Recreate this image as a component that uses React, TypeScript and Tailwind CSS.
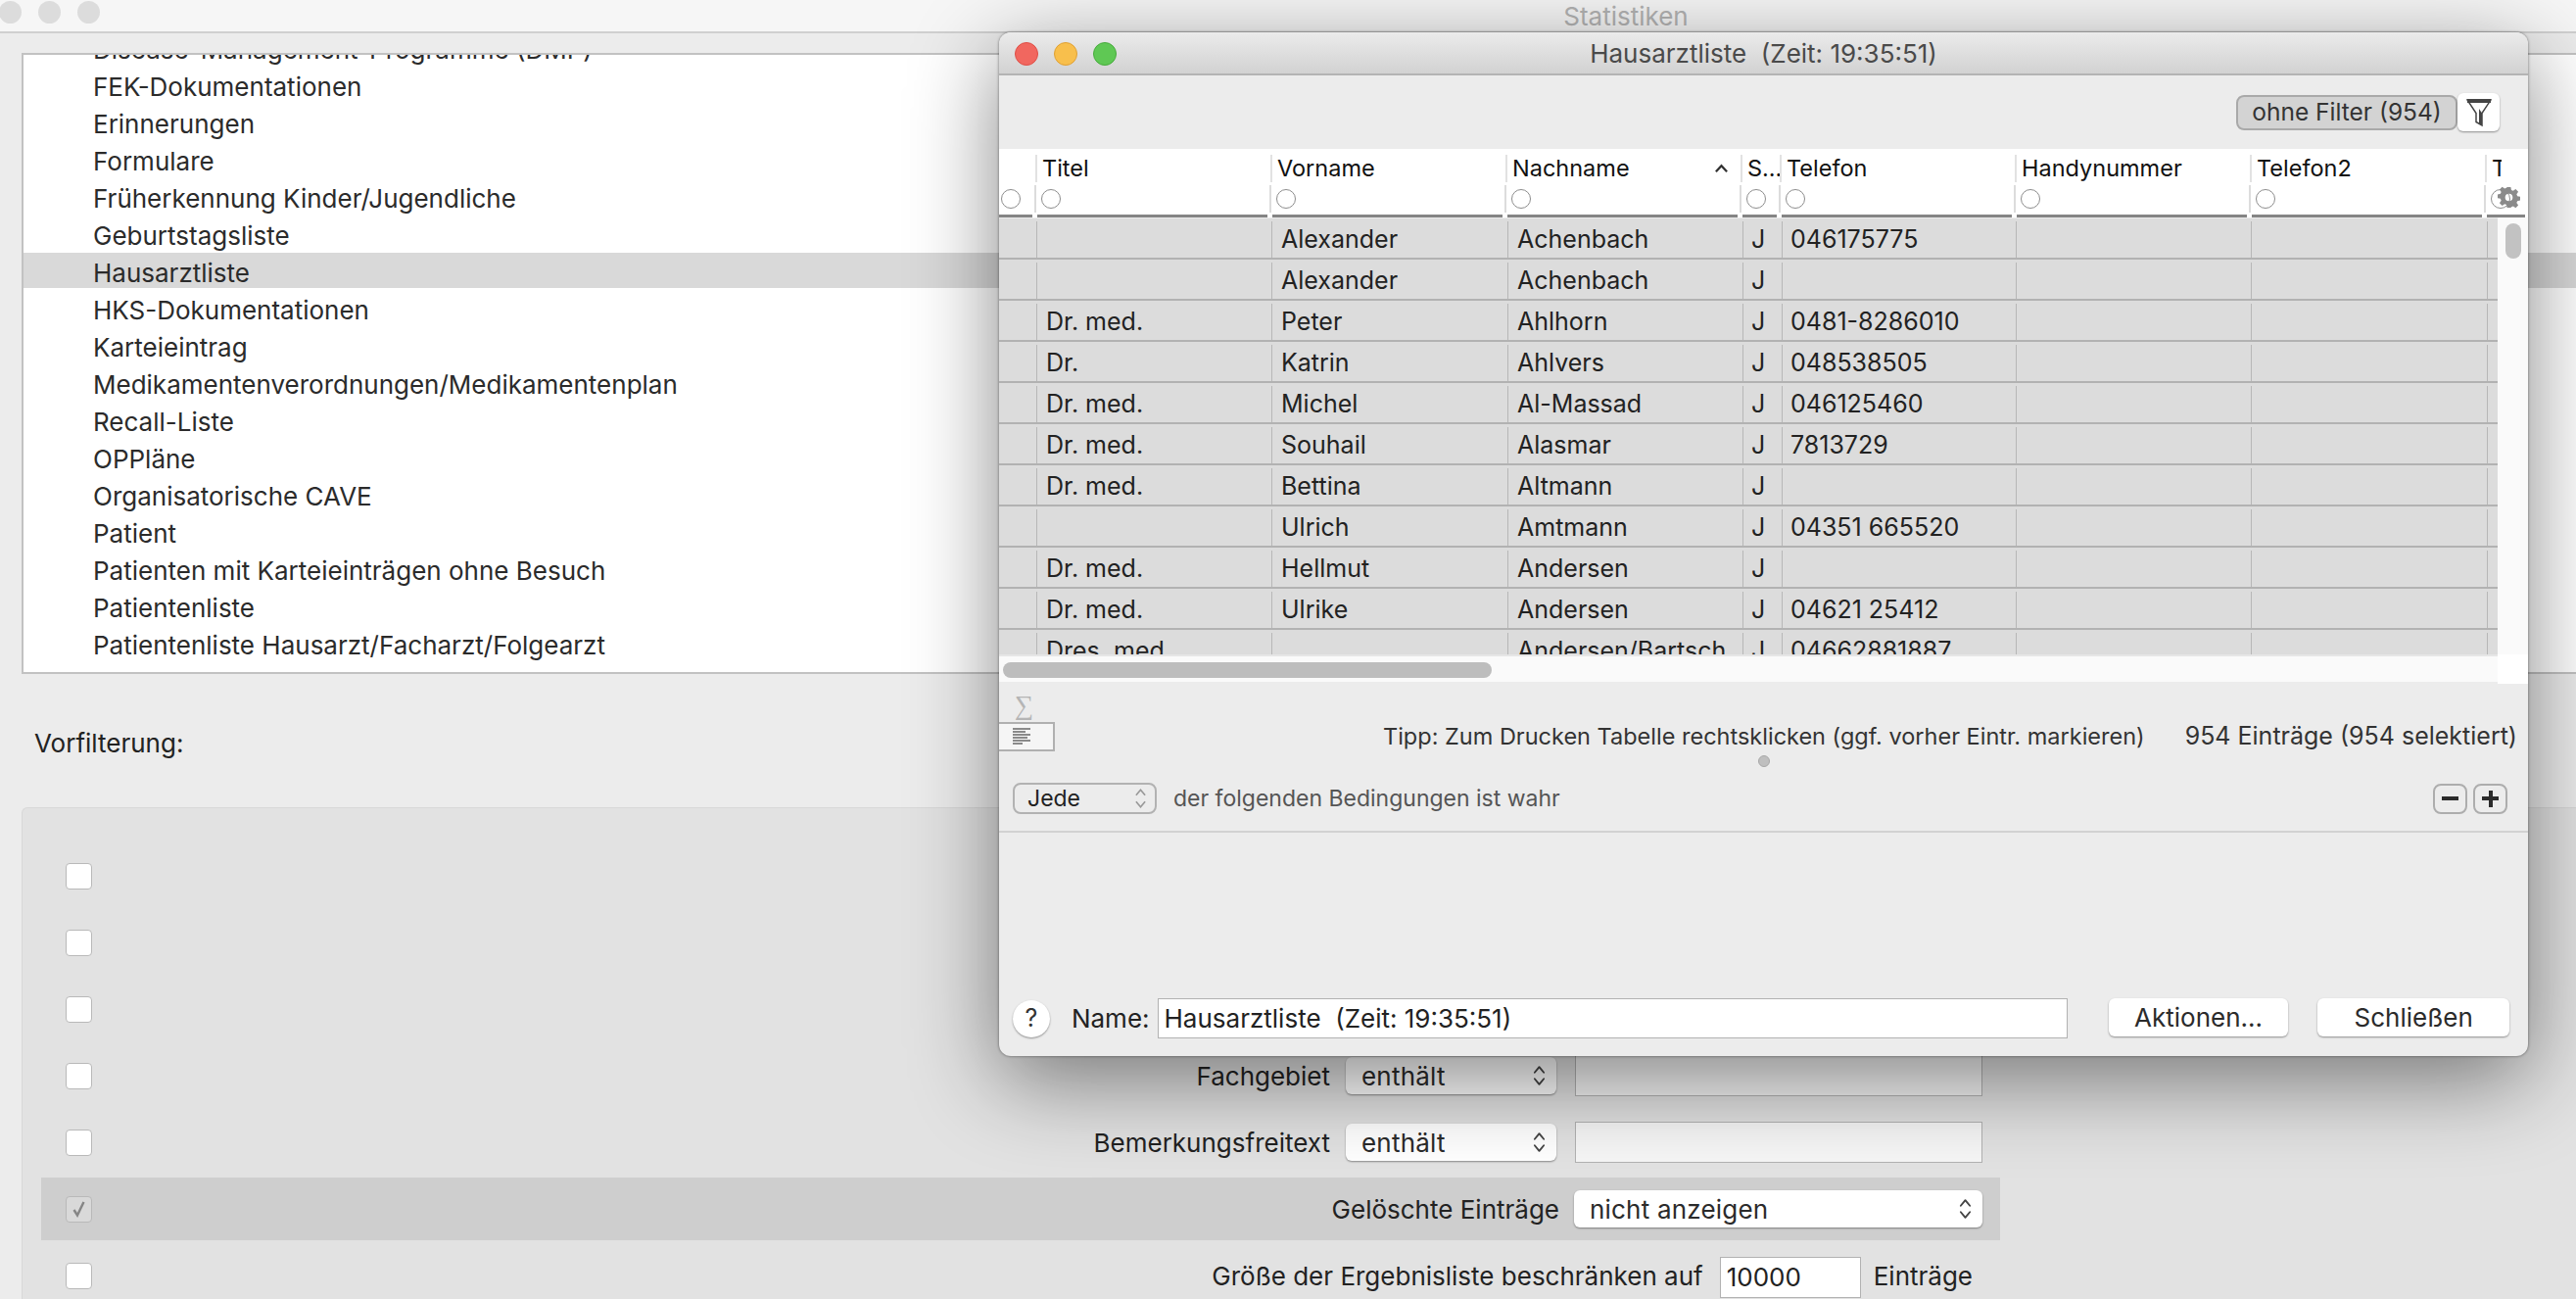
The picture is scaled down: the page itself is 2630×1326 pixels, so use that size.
import React from 'react';

const listItems = [
  'Disease-Management-Programme (DMP)',
  'FEK-Dokumentationen',
  'Erinnerungen',
  'Formulare',
  'Früherkennung Kinder/Jugendliche',
  'Geburtstagsliste',
  'Hausarztliste',
  'HKS-Dokumentationen',
  'Karteieintrag',
  'Medikamentenverordnungen/Medikamentenplan',
  'Recall-Liste',
  'OPPläne',
  'Organisatorische CAVE',
  'Patient',
  'Patienten mit Karteieinträgen ohne Besuch',
  'Patientenliste',
  'Patientenliste Hausarzt/Facharzt/Folgearzt',
];

const rows = [
  ['', 'Alexander', 'Achenbach', 'J', '046175775'],
  ['', 'Alexander', 'Achenbach', 'J', ''],
  ['Dr. med.', 'Peter', 'Ahlhorn', 'J', '0481-8286010'],
  ['Dr.', 'Katrin', 'Ahlvers', 'J', '048538505'],
  ['Dr. med.', 'Michel', 'Al-Massad', 'J', '046125460'],
  ['Dr. med.', 'Souhail', 'Alasmar', 'J', '7813729'],
  ['Dr. med.', 'Bettina', 'Altmann', 'J', ''],
  ['', 'Ulrich', 'Amtmann', 'J', '04351 665520'],
  ['Dr. med.', 'Hellmut', 'Andersen', 'J', ''],
  ['Dr. med.', 'Ulrike', 'Andersen', 'J', '04621 25412'],
  ['Dres. med.', '', 'Andersen/Bartsch', 'J', '04662881887'],
];

function Stepper({ className }: { className?: string }) {
  return (
    <svg viewBox="0 0 14 26" className={className} fill="none" stroke="#444" strokeWidth="2" strokeLinecap="round" strokeLinejoin="round">
      <path d="M2 9.5 7 3.5l5 6" />
      <path d="M2 16.5l5 6 5-6" />
    </svg>
  );
}

function Select({ label, className }: { label: string; className: string }) {
  return (
    <div className={`flex items-center justify-between h-[38px] bg-white rounded-[6px] shadow-[0_1px_2px_rgba(0,0,0,0.4)] pl-[16px] pr-[11px] ${className}`}>
      <span className="text-[26px] text-[#2b2b2b] tracking-[0.2px]">{label}</span>
      <Stepper className="w-[13px] h-[26px]" />
    </div>
  );
}

function Checkbox({ checked }: { checked?: boolean }) {
  return (
    <div className={`w-[27px] h-[27px] rounded-[4px] border border-[#b9b9b9] flex items-center justify-center shrink-0 ${checked ? 'bg-[#d9d9d9]' : 'bg-white'}`}>
      {checked && (
        <svg viewBox="0 0 20 20" className="w-[20px] h-[20px]" fill="none" stroke="#858585" strokeWidth="2.4">
          <path d="M4.5 11l3.5 5.5L14.5 3" />
        </svg>
      )}
    </div>
  );
}

function FilterRow({ checked, highlighted, children }: { checked?: boolean; highlighted?: boolean; children?: React.ReactNode }) {
  return (
    <div className={`flex items-center h-[64px] mb-[4px] pl-[25px] pr-[18px] ${highlighted ? 'bg-[#cecece]' : ''}`}>
      <Checkbox checked={checked} />
      <div className="flex-1 flex items-center justify-end">{children}</div>
    </div>
  );
}

function Radio() {
  return <div className="w-[20px] h-[20px] rounded-full border border-[#8d8d8d] bg-white shrink-0" />;
}

const headerCols = [
  { w: 'w-[37px]', label: '', first: true },
  { w: 'w-[240px]', label: 'Titel' },
  { w: 'w-[240px]', label: 'Vorname' },
  { w: 'w-[240px]', label: 'Nachname', sorted: true },
  { w: 'w-[40px]', label: 'S...' },
  { w: 'w-[240px]', label: 'Telefon' },
  { w: 'w-[240px]', label: 'Handynummer' },
  { w: 'w-[240px]', label: 'Telefon2' },
  { w: 'w-[44px]', label: 'T', clip: true },
];

function HeaderCell({ col }: { col: (typeof headerCols)[number] }) {
  return (
    <div className={`${col.w} shrink-0 flex flex-col`}>
      <div className={`h-[28px] mt-[6px] flex items-center justify-between pl-[5px] pr-[12px] text-[23.5px] text-[#111] whitespace-nowrap ${col.first ? '' : 'border-l-2 border-[#e2e2e2]'}`}>
        <span className={col.clip ? 'w-[10px] overflow-hidden' : ''}>{col.label}</span>
        {col.sorted && (
          <svg viewBox="0 0 16 10" className="w-[15px] h-[10px]" fill="none" stroke="#333" strokeWidth="2.4">
            <path d="M2 8.5 8 2l6 6.5" />
          </svg>
        )}
      </div>
      <div className={`h-[28px] mt-[3px] flex items-center ${col.first ? 'pl-[2px]' : 'pl-[5px] border-l-2 border-[#dcdcdc] -ml-[1px]'}`}>
        <Radio />
      </div>
      <div className={`h-[3px] mt-[2px] bg-[#858585] ${col.first ? 'mr-[3px]' : 'ml-[2px] mr-[3px]'}`} />
    </div>
  );
}

function BodyCell({ w, text, first, tight }: { w: string; text?: string; first?: boolean; tight?: boolean }) {
  return (
    <div className={`${w} shrink-0 mt-[3px] whitespace-nowrap overflow-hidden leading-[37px] ${first ? '' : 'border-l border-[#b7b7b7]'} ${tight ? 'pl-[8px]' : 'pl-[9px]'}`}>
      {text}
    </div>
  );
}

function Gear() {
  return (
    <svg viewBox="0 0 24 24" className="w-[23px] h-[23px]" fill="#8a8a8a">
      <path
        fillRule="evenodd"
        d="M10 1h4l.6 3.2 1.9.8 2.7-1.8 2.8 2.8-1.8 2.7.8 1.9 3.2.6v4l-3.2.6-.8 1.9 1.8 2.7-2.8 2.8-2.7-1.8-1.9.8L14 23h-4l-.6-3.2-1.9-.8-2.7 1.8L2 18l1.8-2.7-.8-1.9L0 12.800v-4l3-.6.8-1.900L2 3.600 4.800.800 7.500 2.600 9.400 1.800z M12 8a4 4 0 1 0 0 8 4 4 0 0 0 0-8z"
      />
    </svg>
  );
}

function Dialog() {
  return (
    <div className="absolute left-[1020px] top-[33px] w-[1561px] h-[1045px] flex flex-col bg-[#ececec] rounded-[12px] overflow-hidden shadow-[0_24px_90px_rgba(0,0,0,0.48),0_0_3px_rgba(0,0,0,0.5)]">
      {/* Titelleiste */}
      <div className="relative h-[44px] shrink-0 flex items-center justify-center bg-gradient-to-b from-[#ebebeb] to-[#d2d2d2] border-b-2 border-[#b4b4b4]">
        <div className="absolute left-[16px] top-[10px] flex gap-[16px]">
          <div className="w-[24px] h-[24px] rounded-full bg-[#f1675f] border border-[#df4f47]" />
          <div className="w-[24px] h-[24px] rounded-full bg-[#f8bf4c] border border-[#dfa034]" />
          <div className="w-[24px] h-[24px] rounded-full bg-[#5fc854] border border-[#48ab3d]" />
        </div>
        <span className="text-[26px] text-[#4a4a4a] whitespace-pre">Hausarztliste  (Zeit: 19:35:51)</span>
      </div>

      {/* Filter-Leiste */}
      <div className="h-[75px] shrink-0 flex items-center justify-end pr-[29px]">
        <div className="h-[36px] w-[226px] flex items-center justify-center bg-[#d3d3d3] border-2 border-[#a9a9a9] rounded-[8px] text-[24.5px] text-[#333]">
          ohne Filter (954)
        </div>
        <div className="h-[39px] w-[43px] flex items-center justify-center bg-white rounded-[6px] shadow-[0_1px_2px_rgba(0,0,0,0.4)]">
          <svg viewBox="0 0 26 30" className="w-[26px] h-[30px]">
            <path d="M1 2h24L16 15.500V28l-6-3.500V15.500z" fill="#fff" stroke="#444" strokeWidth="1.500" />
            <path d="M1 1h24v4H1z" fill="#444" />
            <path d="M13 11l3 4.500V28l-3-2z" fill="#444" />
          </svg>
        </div>
      </div>

      {/* Tabellenkopf */}
      <div className="relative h-[70px] shrink-0 flex bg-white">
        {headerCols.map((col) => (
          <HeaderCell key={col.label || 'sel'} col={col} />
        ))}
        <div className="absolute left-[1530px] top-[38px]">
          <Gear />
        </div>
      </div>

      {/* Tabellenzeilen */}
      <div className="h-[446px] shrink-0 flex">
        <div className="w-[1530px] shrink-0 overflow-hidden pt-[1px] text-[25px] text-[#222]">
          {rows.map((r, i) => (
            <div key={i} className="flex h-[42px] bg-[#dcdcdc] border-b-2 border-[#b2b2b2]">
              <BodyCell w="w-[38px]" first />
              <BodyCell w="w-[240px]" text={r[0]} />
              <BodyCell w="w-[241px]" text={r[1]} />
              <BodyCell w="w-[240px]" text={r[2]} />
              <BodyCell w="w-[40px]" text={r[3]} tight />
              <BodyCell w="w-[239px]" text={r[4]} tight />
              <BodyCell w="w-[240px]" />
              <BodyCell w="w-[241px]" />
              <BodyCell w="w-[11px]" />
            </div>
          ))}
        </div>
        <div className="flex-1 bg-[#fafafa] pl-[8px] pt-[6px]">
          <div className="w-[16px] h-[36px] rounded-full bg-[#c2c2c2]" />
        </div>
      </div>

      {/* Horizontaler Rollbalken */}
      <div className="h-[30px] shrink-0 flex">
        <div className="w-[1530px] shrink-0 border-t-2 border-[#e6e6e6] border-b-2 border-b-[#ececec] bg-[#fafafa] pl-[4px] pt-[6px]">
          <div className="w-[499px] h-[16px] rounded-full bg-[#bdbdbd]" />
        </div>
        <div className="flex-1 bg-white" />
      </div>

      {/* Status */}
      <div className="h-[72px] shrink-0 flex items-end pb-[3px] pr-[11px]">
        <div className="w-[57px] shrink-0 flex flex-col">
          <span className="h-[34px] pl-[16px] text-[27px] leading-[34px] text-[#b5b5b5] font-['Liberation_Serif',serif]">∑</span>
          <div className="h-[30px] flex items-center justify-center pr-[8px] bg-[#f5f5f5] border-2 border-l-0 border-[#b0b0b0]">
            <svg viewBox="0 0 20 18" className="w-[20px] h-[18px]" fill="#8a8a8a">
              <path d="M0 0h18v2H0zM0 3h13v2H0zM0 6h18v2H0zM0 9h15v2H0zM0 12h18v2H0zM0 15h10v2H0z" />
            </svg>
          </div>
        </div>
        <div className="flex-1 h-[30px] flex items-center justify-end gap-[41px] whitespace-nowrap">
          <span className="text-[23.5px] text-[#333]">Tipp: Zum Drucken Tabelle rechtsklicken (ggf. vorher Eintr. markieren)</span>
          <span className="text-[25px] text-[#333]">954 Einträge (954 selektiert)</span>
        </div>
      </div>
      <div className="h-[14px] shrink-0 flex items-center justify-center">
        <div className="w-[12px] h-[12px] rounded-full bg-[#bfbfbf] border border-[#a8a8a8]" />
      </div>

      {/* Bedingungen */}
      <div className="h-[32px] mt-[15px] shrink-0 flex items-center pl-[14px] pr-[21px]">
        <div className="w-[147px] h-[32px] flex items-center justify-between pl-[13px] pr-[8px] border-2 border-[#b2b2b2] rounded-[8px] text-[23px] text-[#222]">
          Jede
          <svg viewBox="0 0 14 26" className="w-[13px] h-[24px]" fill="none" stroke="#999" strokeWidth="1.800">
            <path d="M2 9.500 7 3.500l5 6" />
            <path d="M2 16.500l5 6 5-6" />
          </svg>
        </div>
        <span className="ml-[17px] text-[23px] text-[#555]">der folgenden Bedingungen ist wahr</span>
        <div className="ml-auto flex gap-[6px]">
          <div className="w-[35px] h-[31px] flex items-center justify-center border-2 border-[#adadad] rounded-[8px]">
            <div className="w-[17px] h-[4px] bg-[#2b2b2b]" />
          </div>
          <div className="relative w-[35px] h-[31px] flex items-center justify-center border-2 border-[#adadad] rounded-[8px]">
            <div className="w-[17px] h-[4px] bg-[#2b2b2b]" />
            <div className="absolute w-[4px] h-[17px] bg-[#2b2b2b]" />
          </div>
        </div>
      </div>
      <div className="h-[2px] mt-[17px] shrink-0 bg-[#d2d2d2]" />
      <div className="flex-1" />

      {/* Fusszeile */}
      <div className="h-[41px] mb-[18px] shrink-0 flex items-center pl-[14px] pr-[19px]">
        <div className="w-[38px] h-[38px] rounded-full bg-white shadow-[0_1px_2px_rgba(0,0,0,0.4)] flex items-center justify-center text-[25px] text-[#333]">?</div>
        <span className="ml-[22px] text-[26px] text-[#222]">Name:</span>
        <div className="ml-[8px] w-[931px] h-[41px] flex items-center pl-[6px] bg-white border border-[#b2b2b2] text-[26px] text-[#222] whitespace-pre">
          Hausarztliste  (Zeit: 19:35:51)
        </div>
        <div className="ml-[42px] w-[184px] h-[39px] mb-[2px] flex items-center justify-center bg-white rounded-[6px] shadow-[0_1px_2px_rgba(0,0,0,0.4)] text-[26px] text-[#2b2b2b]">Aktionen...</div>
        <div className="ml-[30px] w-[196px] h-[39px] mb-[2px] flex items-center justify-center bg-white rounded-[6px] shadow-[0_1px_2px_rgba(0,0,0,0.4)] text-[26px] text-[#2b2b2b]">Schließen</div>
      </div>
    </div>
  );
}

export default function App() {
  return (
    <div className="relative w-[2630px] h-[1326px] overflow-hidden bg-[#ececec] font-['Inter','Liberation_Sans',sans-serif] text-[26px] text-[#222]">
      {/* Hauptfenster */}
      <div className="h-[34px] relative flex items-center justify-center bg-[#f6f6f6] border-b-2 border-[#d0d0d0]">
        <div className="absolute left-[-1px] top-[1px] flex gap-[17px]">
          <div className="w-[23px] h-[23px] rounded-full bg-[#dcdcdc]" />
          <div className="w-[23px] h-[23px] rounded-full bg-[#dcdcdc]" />
          <div className="w-[23px] h-[23px] rounded-full bg-[#dcdcdc]" />
        </div>
        <span className="ml-[690px] text-[26px] text-[#b3b3b3]">Statistiken</span>
      </div>

      <div className="pl-[22px]">
        <div className="mt-[20px] h-[634px] bg-white border-2 border-[#c2c2c2] border-r-0 overflow-hidden">
          <div className="-mt-[26px]">
            {listItems.map((item) => (
              <div
                key={item}
                className={`h-[36px] mb-[2px] pl-[71px] leading-[42px] whitespace-nowrap text-[#2b2b2b] ${item === 'Hausarztliste' ? 'bg-[#d9d9d9]' : ''}`}
              >
                {item}
              </div>
            ))}
          </div>
        </div>

        <div className="h-[136px] pt-[4px] pl-[13px] flex items-center">Vorfilterung:</div>

        <div className="h-[520px] pt-[37px] pl-[19px] bg-[#e2e2e2] border border-[#d8d8d8] border-r-0 rounded-tl-[6px]">
          <div className="w-[2000px]">
            <FilterRow />
            <FilterRow />
            <FilterRow />
            <FilterRow>
              <span>Fachgebiet</span>
              <Select label="enthält" className="ml-[16px] w-[215px]" />
              <div className="ml-[19px] w-[416px] h-[42px] bg-[#f6f6f6] border border-[#b2b2b2]" />
            </FilterRow>
            <FilterRow>
              <span>Bemerkungsfreitext</span>
              <Select label="enthält" className="ml-[16px] w-[215px]" />
              <div className="ml-[19px] w-[416px] h-[42px] bg-[#f6f6f6] border border-[#b2b2b2]" />
            </FilterRow>
            <FilterRow checked highlighted>
              <span>Gelöschte Einträge</span>
              <Select label="nicht anzeigen" className="ml-[15px] w-[417px]" />
            </FilterRow>
            <FilterRow>
              <span>Größe der Ergebnisliste beschränken auf</span>
              <div className="ml-[17px] w-[144px] h-[42px] mt-[3px] flex items-center pl-[6px] bg-white border border-[#b2b2b2] text-[#222]">10000</div>
              <span className="ml-[13px] mr-[10px]">Einträge</span>
            </FilterRow>
          </div>
        </div>
      </div>

      <Dialog />
    </div>
  );
}
